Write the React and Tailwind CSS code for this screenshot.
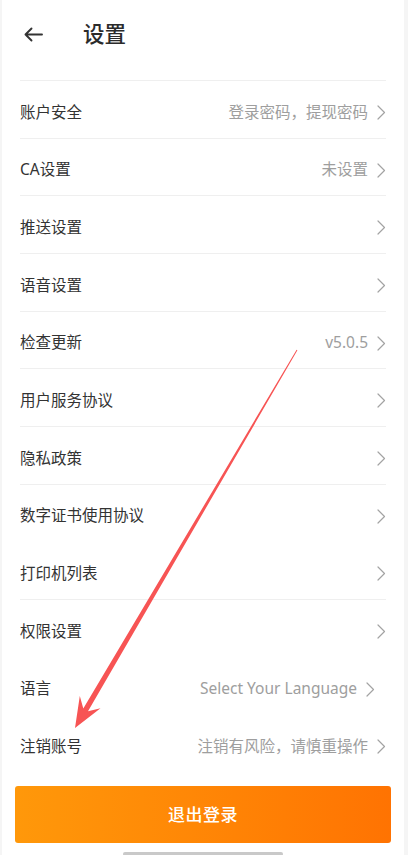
import React from "react";

const rows = [
  { label: "账户安全", value: "登录密码，提现密码", border: true },
  { label: "CA设置", value: "未设置", border: true },
  { label: "推送设置", value: "", border: true },
  { label: "语音设置", value: "", border: true },
  { label: "检查更新", value: "v5.0.5", border: true },
  { label: "用户服务协议", value: "", border: true },
  { label: "隐私政策", value: "", border: true },
  { label: "数字证书使用协议", value: "", border: true },
  { label: "打印机列表", value: "", border: false },
  { label: "权限设置", value: "", border: true },
  { label: "语言", value: "Select Your Language", border: false, inset: true },
  { label: "注销账号", value: "注销有风险，请慎重操作", border: false },
];

function Chevron() {
  return (
    <svg width="9" height="15" viewBox="0 0 9 15" fill="none" className="shrink-0">
      <path d="M1 1 L7.5 7.5 L1 14" stroke="#a3a3a3" strokeWidth="1.2" strokeLinecap="round" strokeLinejoin="round" />
    </svg>
  );
}

function RedArrow() {
  const sx = 295, sy = 350, tx = 73, ty = 728;
  const dx = tx - sx, dy = ty - sy;
  const len = Math.hypot(dx, dy);
  const ux = dx / len, uy = dy / len;
  const nx = -uy, ny = ux;
  const headLen = 30;
  const notch = 21;
  const barb = 12;
  const bx = tx - ux * headLen, by = ty - uy * headLen;
  const kx = tx - ux * notch, ky = ty - uy * notch;
  const w0 = 0.5, w1 = 2.7;
  const p = (x, y) => `${x.toFixed(1)},${y.toFixed(1)}`;
  const pts = [
    p(tx, ty),
    p(bx + nx * barb, by + ny * barb),
    p(kx + nx * w1, ky + ny * w1),
    p(sx + nx * w0, sy + ny * w0),
    p(sx - nx * w0, sy - ny * w0),
    p(kx - nx * w1, ky - ny * w1),
    p(bx - nx * barb, by - ny * barb),
  ].join(" ");
  return (
    <svg className="absolute left-0 top-0 pointer-events-none" width="408" height="855" viewBox="0 0 408 855">
      <polygon points={pts} fill="#f75454" />
    </svg>
  );
}

export default function App() {
  return (
    <div
      className="relative w-[408px] h-[855px] overflow-hidden bg-white border-l-2 border-r-4 border-[#f5f5f5] flex flex-col"
      style={{ fontFamily: '"Noto Sans", "Noto Sans CJK SC", sans-serif' }}
    >
      <div className="h-[80px] flex items-center pl-[22px] pb-[12px]">
        <svg width="19" height="15" viewBox="0 0 19 15" fill="none">
          <path d="M18 7.5 H1.5 M7.5 1.5 L1.5 7.5 L7.5 13.5" stroke="#333333" strokeWidth="1.9" strokeLinecap="round" strokeLinejoin="round" />
        </svg>
        <span className="ml-[40px] text-[21.5px] leading-none font-medium text-[#2b2b2b]">设置</span>
      </div>

      <div className="mx-[18px] flex flex-col">
        {rows.map((r, i) => (
          <div
            key={i}
            className={`h-[57.7px] flex items-center justify-between border-t ${r.border ? "border-[#efefef]" : "border-transparent"}`}
          >
            <span className="text-[15.5px] leading-none text-[#333333] pt-[6px]">{r.label}</span>
            <div className={`flex items-center gap-[9px] pt-[6px] ${r.inset ? "mr-[11px]" : ""}`}>
              {r.value && <span className="text-[15.5px] leading-none text-[#9e9e9e]">{r.value}</span>}
              <Chevron />
            </div>
          </div>
        ))}
      </div>

      <div className="mx-[13px] mt-[14px] h-[57px] rounded-[3px] bg-gradient-to-r from-[#ff980a] to-[#ff7302] flex items-center justify-center">
        <span className="text-[17px] leading-none text-white font-medium tracking-[0.5px]">退出登录</span>
      </div>

      <div className="flex-1 flex items-end justify-center">
        <div className="w-[160px] h-[4px] rounded-full bg-[#c9c9c9] mb-[-1px]" />
      </div>

      <RedArrow />
    </div>
  );
}
